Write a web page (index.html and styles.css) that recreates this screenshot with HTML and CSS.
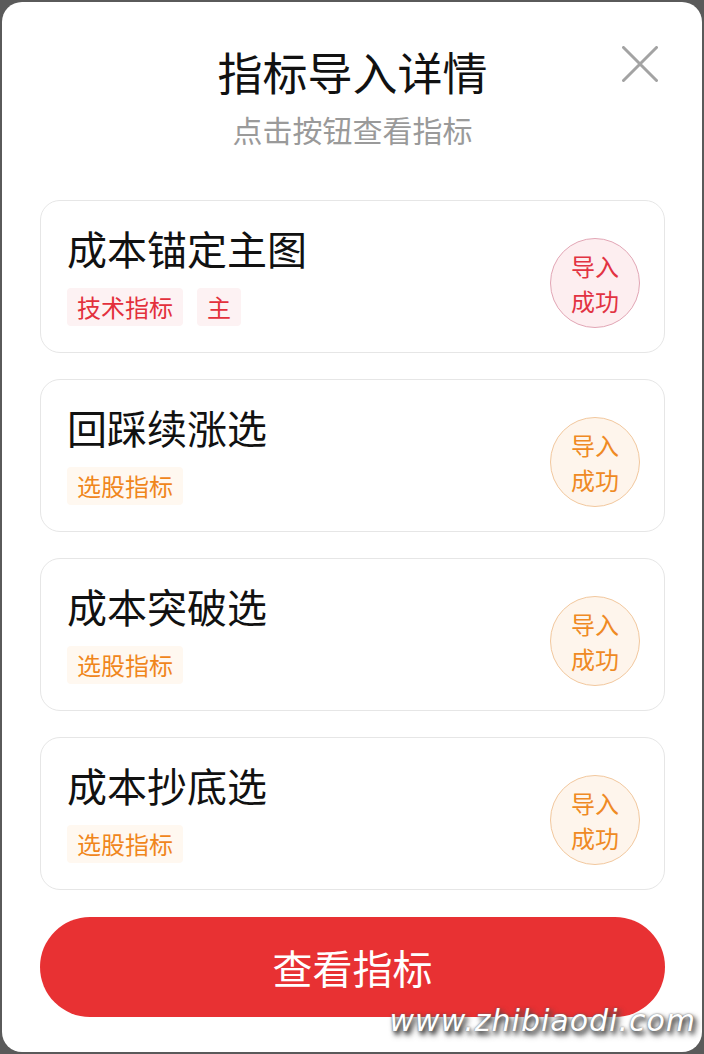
FILE: index.html
```html
<!DOCTYPE html>
<html lang="zh-CN">
<head>
<meta charset="UTF-8">
<meta name="viewport" content="width=device-width, initial-scale=1.0">
<title>指标导入详情</title>
<link rel="stylesheet" href="styles.css">
</head>
<body>

<div class="modal">
    <div class="modal-header">
        <h2>指标导入详情</h2>
        <p class="subtitle">点击按钮查看指标</p>
        <button class="close-btn" aria-label="关闭">
            <svg width="36" height="36" viewBox="0 0 36 36">
                <path d="M1.5 1.5 L34.5 34.5 M34.5 1.5 L1.5 34.5" stroke="#a3a3a3" stroke-width="3" stroke-linecap="round" fill="none"/>
            </svg>
        </button>
    </div>

    <div class="card-list">
        <div class="card">
            <div class="card-info">
                <div class="card-title">成本锚定主图</div>
                <div class="tags">
                    <span class="tag tag-red">技术指标</span>
                    <span class="tag tag-red">主</span>
                </div>
            </div>
            <div class="badge badge-red">导入<br>成功</div>
        </div>
        <div class="card">
            <div class="card-info">
                <div class="card-title">回踩续涨选</div>
                <div class="tags">
                    <span class="tag tag-orange">选股指标</span>
                </div>
            </div>
            <div class="badge badge-orange">导入<br>成功</div>
        </div>
        <div class="card">
            <div class="card-info">
                <div class="card-title">成本突破选</div>
                <div class="tags">
                    <span class="tag tag-orange">选股指标</span>
                </div>
            </div>
            <div class="badge badge-orange">导入<br>成功</div>
        </div>
        <div class="card">
            <div class="card-info">
                <div class="card-title">成本抄底选</div>
                <div class="tags">
                    <span class="tag tag-orange">选股指标</span>
                </div>
            </div>
            <div class="badge badge-orange">导入<br>成功</div>
        </div>
    </div>

    <button class="view-btn">查看指标</button>

    <div class="watermark">www.zhibiaodi.com</div>
</div>

</body>
</html>
```

FILE: styles.css
```css
body {
    margin: 0;
    background-color: #5a5a5a;
    font-family: "Noto Sans CJK SC", "Noto Sans", sans-serif;
}

.modal {
    position: relative;
    box-sizing: border-box;
    margin: 2px 2px 0 2px;
    height: 1050px;
    background-color: #fff;
    border-radius: 20px;
    padding: 40px 37px 0 38px;
    overflow: hidden;
}

.modal-header {
    text-align: center;
}

.modal-header h2 {
    margin: 0;
    font-size: 45px;
    line-height: 60px;
    font-weight: 400;
    color: #111;
}

.subtitle {
    margin: 7px 0 0 0;
    font-size: 30px;
    line-height: 40px;
    color: #9a9a9a;
}

.close-btn {
    position: absolute;
    top: 44px;
    right: 44px;
    padding: 0;
    border: none;
    background: none;
    width: 36px;
    height: 36px;
    cursor: pointer;
}

.card-list {
    margin-top: 51px;
    display: flex;
    flex-direction: column;
    gap: 26px;
}

.card {
    box-sizing: border-box;
    height: 153px;
    border: 1px solid #e6e6e6;
    border-radius: 20px;
    padding: 21px 24px 0 26px;
    display: flex;
    justify-content: space-between;
    align-items: flex-start;
}

.card-title {
    font-size: 40px;
    line-height: 52px;
    color: #111;
}

.tags {
    margin-top: 14px;
    display: flex;
    gap: 14px;
}

.tag {
    font-size: 24px;
    line-height: 38px;
    padding: 0 10px;
    border-radius: 4px;
}

.tag-red {
    color: #e3303c;
    background-color: #fdf2f3;
}

.tag-orange {
    color: #f0861c;
    background-color: #fff8f0;
}

.badge {
    box-sizing: border-box;
    margin-top: 16px;
    width: 90px;
    height: 90px;
    border-radius: 50%;
    display: flex;
    align-items: center;
    justify-content: center;
    text-align: center;
    font-size: 24px;
    line-height: 35px;
}

.badge-red {
    color: #e23342;
    background-color: #fdeef0;
    border: 1px solid #e2a6b5;
}

.badge-orange {
    color: #ef8a24;
    background-color: #fef5ec;
    border: 1px solid #f2c89e;
}

.view-btn {
    display: block;
    width: 100%;
    height: 100px;
    margin-top: 27px;
    border: none;
    border-radius: 50px;
    background-color: #e83133;
    color: #fff;
    font-family: "Noto Sans CJK SC", "Noto Sans", sans-serif;
    font-size: 40px;
    cursor: pointer;
}

.watermark {
    position: absolute;
    right: 6px;
    bottom: 14px;
    font-family: "DejaVu Sans", sans-serif;
    font-style: italic;
    font-size: 30px;
    letter-spacing: 1px;
    color: #fff;
    text-shadow: 0 0 2px #666, 2px 3px 4px #444, 3px 4px 6px #555;
}
```
